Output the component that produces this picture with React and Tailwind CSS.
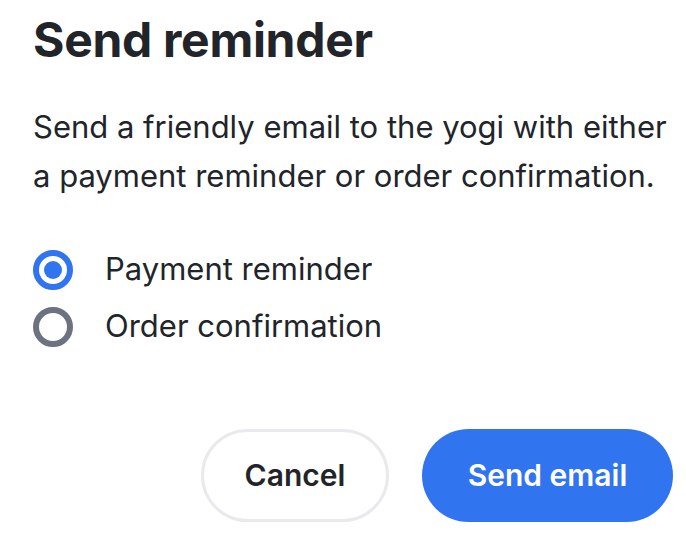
const RadioOption = ({ checked, label }) => (
  <label className="flex items-center gap-[32px] h-[57px]">
    {checked ? (
      <span className="flex items-center justify-center w-[40px] h-[40px] rounded-full border-[6px] border-[#3174f0]">
        <span className="w-[18px] h-[18px] rounded-full bg-[#3174f0]" />
      </span>
    ) : (
      <span className="w-[40px] h-[40px] rounded-full border-[6px] border-[#6b7280]" />
    )}
    <span className="text-[31px] text-[#212529]">{label}</span>
  </label>
);

const App = () => {
  return (
    <div
      className="w-[686px] h-[550px] bg-white pl-[33px] pr-[13px] pt-[12px]"
      style={{ fontFamily: "Inter, 'Noto Sans', sans-serif" }}
    >
      <h1 className="text-[48px] leading-[56px] font-bold text-[#212529] tracking-[-0.3px]">
        Send reminder
      </h1>
      <p className="mt-[34px] text-[31px] leading-[49px] text-[#212529]">
        Send a friendly email to the yogi with either a payment reminder or order confirmation.
      </p>
      <div className="mt-[41px] flex flex-col">
        <RadioOption checked label="Payment reminder" />
        <RadioOption label="Order confirmation" />
      </div>
      <div className="mt-[74px] flex justify-end gap-[33px]">
        <button className="h-[93px] w-[188px] rounded-full border-[3px] border-[#e9eaed] bg-white text-[30px] font-semibold text-[#212529]">
          Cancel
        </button>
        <button className="h-[93px] w-[251px] rounded-full bg-[#3174f0] text-[30px] font-semibold text-white">
          Send email
        </button>
      </div>
    </div>
  );
};

export default App;
